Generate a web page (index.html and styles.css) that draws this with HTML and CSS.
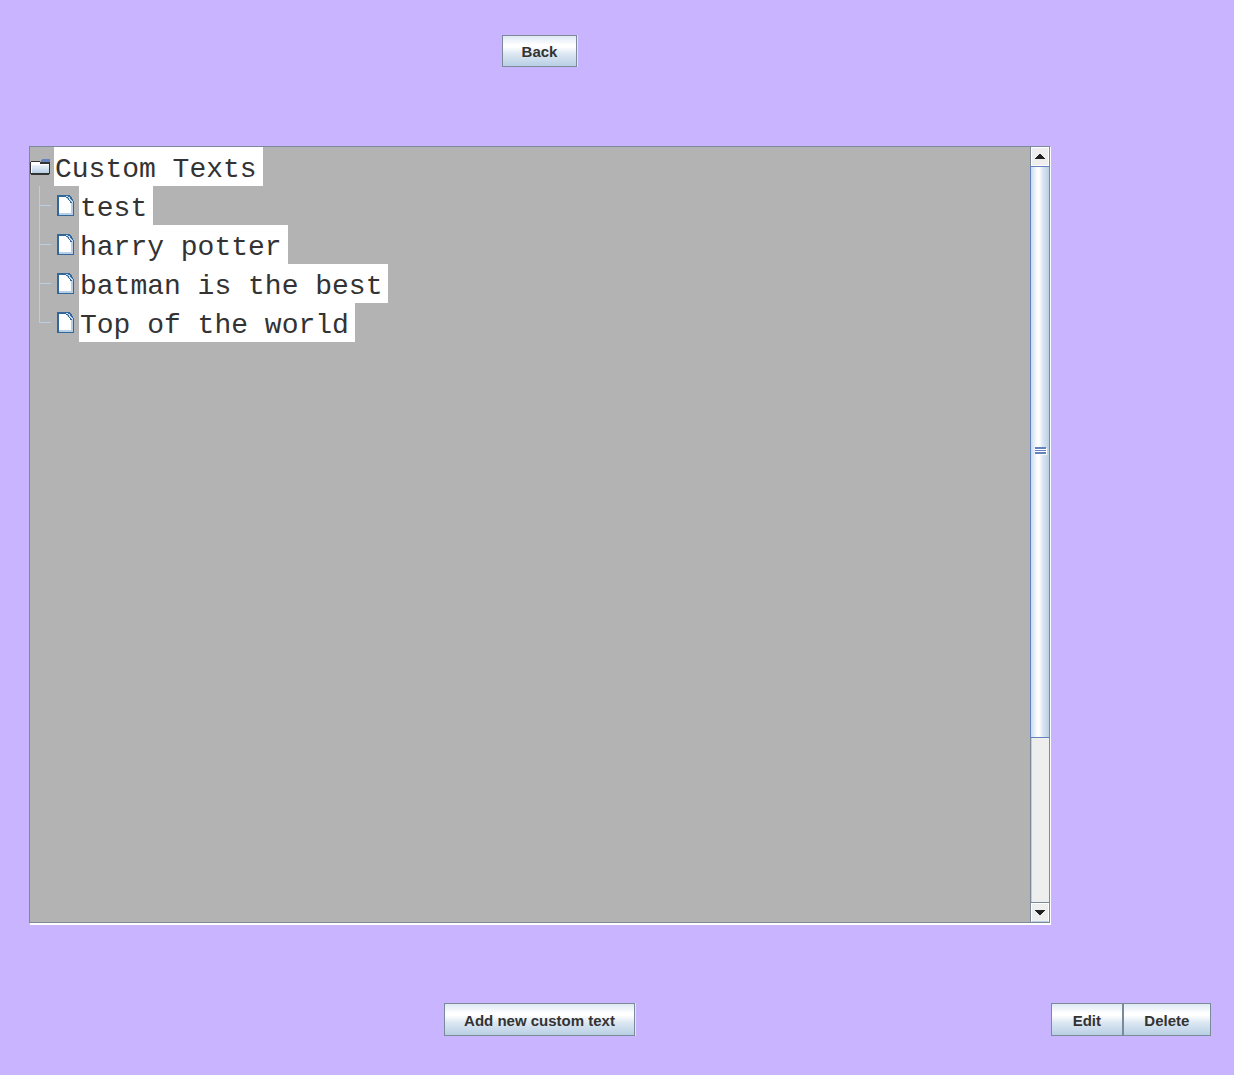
FILE: index.html
```html
<!DOCTYPE html>
<html lang="en">
<head>
<meta charset="utf-8">
<meta name="viewport" content="width=device-width, initial-scale=1">
<title>Custom Texts</title>
<link rel="stylesheet" href="styles.css">
</head>
<body>
<svg class="defs" aria-hidden="true">
  <symbol id="file" viewBox="0 0 17 21">
    <path d="M0 0H13V1H14V2H15V4H16V6H17V21H0Z" fill="#336699"/>
    <path d="M2 2H9L15 8V19H2Z" fill="#fff"/>
    <path d="M14 8H16V20H2V18H14Z" fill="#b8cfe5"/>
    <path d="M9 1H12V2H13V3H14V5H15V6H16V8H15V7H14V6H13V5H12V3H11V2H9Z" fill="#c8dbee"/>
    <path d="M9 2H11V3H12V5H13V6H14V7H15V8H13V6H12V5H11V3H9ZM11 1H12V2H11ZM13 3H14V4H13Z" fill="#336699"/>
  </symbol>
</svg>
<main class="page">
  <nav class="top"><button class="btn" type="button">Back</button></nav>
  <section class="pane">
    <div class="tree">
      <div class="root">
        <svg class="folder" viewBox="0 0 20 16" aria-hidden="true">
          <defs>
            <linearGradient id="fold" x1="0" y1="0" x2="0" y2="1">
              <stop offset="0" stop-color="#fff"/><stop offset="1" stop-color="#b8cfe5"/>
            </linearGradient>
          </defs>
          <path d="M12 0H20V3H11V1H12Z" fill="#6382bf"/>
          <path d="M0 3H1V2H10V3H20V15H19V16H1V15H0Z" fill="#333"/>
          <path d="M1 3H10V5H19V14H1Z" fill="url(#fold)"/>
          <path d="M1 3H10V5H19V6H2V14H1Z" fill="#fff"/>
        </svg>
        <span class="label">Custom Texts</span>
      </div>
      <ul class="items">
        <li class="item"><svg class="file" aria-hidden="true"><use href="#file"/></svg><span class="label">test</span></li>
        <li class="item"><svg class="file" aria-hidden="true"><use href="#file"/></svg><span class="label">harry potter</span></li>
        <li class="item"><svg class="file" aria-hidden="true"><use href="#file"/></svg><span class="label">batman is the best</span></li>
        <li class="item"><svg class="file" aria-hidden="true"><use href="#file"/></svg><span class="label">Top of the world</span></li>
      </ul>
    </div>
    <div class="scrollbar">
      <button class="arrow" type="button" aria-label="Scroll up">
        <svg class="tri" viewBox="0 0 10 5" aria-hidden="true"><path d="M4 0H6V1H7V2H8V3H9V4H10V5H0V4H1V3H2V2H3V1H4Z" fill="#222"/></svg>
      </button>
      <div class="track">
        <div class="thumb"><span class="grip"></span></div>
      </div>
      <button class="arrow arrow-down" type="button" aria-label="Scroll down">
        <svg class="tri" viewBox="0 0 10 5" aria-hidden="true"><path d="M0 0H10V1H9V2H8V3H7V4H6V5H4V4H3V3H2V2H1V1H0Z" fill="#222"/></svg>
      </button>
    </div>
  </section>
  <div class="bottom"><button class="btn" type="button">Add new custom text</button></div>
  <div class="actions"><button class="btn" type="button">Edit</button><button class="btn" type="button">Delete</button></div>
</main>
</body>
</html>
```
FILE: styles.css
```css
* { box-sizing: border-box; }

body {
  margin: 0;
  background: #c8b4ff;
  color: #333;
  font-family: "Liberation Sans", Arial, sans-serif;
}

.defs { display: none; }

.page {
  display: grid;
  grid-template-columns: 1fr 160px;
  grid-template-rows: auto 1fr auto;
  gap: 79px 1px;
  min-height: 100vh;
  padding: 35px 23px 39px 29px;
}

.top,
.bottom {
  grid-column: 1;
  display: flex;
  justify-content: center;
}

.actions {
  grid-column: 2;
  display: flex;
}

.btn {
  height: 32px;
  padding: 2px 19px 0;
  border: 1px solid #7a8a99;
  background: linear-gradient(#dde8f3, #fff 30%, #fff 36%, #dce7f2 60%, #b8cfe5);
  box-shadow: 1px 0 #e4e4f4;
  color: #333;
  font: bold 15px/28px "Liberation Sans", Arial, sans-serif;
}

.actions .btn,
.bottom .btn { height: 33px; }

.actions .btn {
  flex: 1 1 auto;
  box-shadow: none;
}

.pane {
  grid-column: 1;
  display: flex;
  margin-bottom: 1px;
  border: 1px solid #7a8a99;
  background: #b3b3b3;
  box-shadow: 1px 1px #fff, 1px 2px #fff;
}

.tree { flex: 1; }

.root {
  display: flex;
  align-items: center;
  gap: 4px;
}

.folder {
  width: 20px;
  height: 16px;
}

.items {
  margin: 0;
  padding: 0 0 0 9px;
  list-style: none;
}

.item {
  display: flex;
  align-items: center;
  gap: 5px;
  padding-left: 18px;
  background:
    linear-gradient(#b8cfe5, #b8cfe5) 0 0 / 1px 100% no-repeat,
    linear-gradient(#b8cfe5, #b8cfe5) 0 19px / 12px 1px no-repeat;
}

.item:last-child { background-size: 1px 19px, 12px 1px; }

.file {
  width: 17px;
  height: 21px;
}

.label {
  padding: 7px 6px 0 1px;
  background: #fff;
  font: 28px/32px "Liberation Mono", "Courier New", monospace;
}

.scrollbar {
  display: flex;
  flex-direction: column;
  width: 19px;
  border-left: 1px solid #7a8a99;
  background: #eee;
}

.arrow {
  display: flex;
  align-items: center;
  justify-content: center;
  height: 19px;
  padding: 0 1px 0 0;
  border: 1px solid #fff;
  background: #eee;
}

.arrow-down {
  border-bottom-color: #b8cfe5;
}

.tri {
  width: 10px;
  height: 5px;
}

.track {
  flex: 1;
  border-bottom: 1px solid #7a8a99;
  box-shadow: inset 1px 0 #b8cfe5;
}

.thumb {
  display: flex;
  align-items: center;
  justify-content: center;
  height: 77.7%;
  margin-left: -1px;
  border: 1px solid #6382bf;
  border-right: 0;
  background: linear-gradient(90deg, #c8dbee, #fff 35%, #fff 45%, #dce7f2 65%, #b8cfe5);
}

.grip {
  width: 11px;
  height: 7px;
  margin-bottom: 2px;
  border: solid #6382bf;
  border-width: 2px 0;
  background: linear-gradient(#fff 0 1px, #6382bf 1px 2px, #fff 2px);
  box-shadow: 1px 1px #fff;
}
```
